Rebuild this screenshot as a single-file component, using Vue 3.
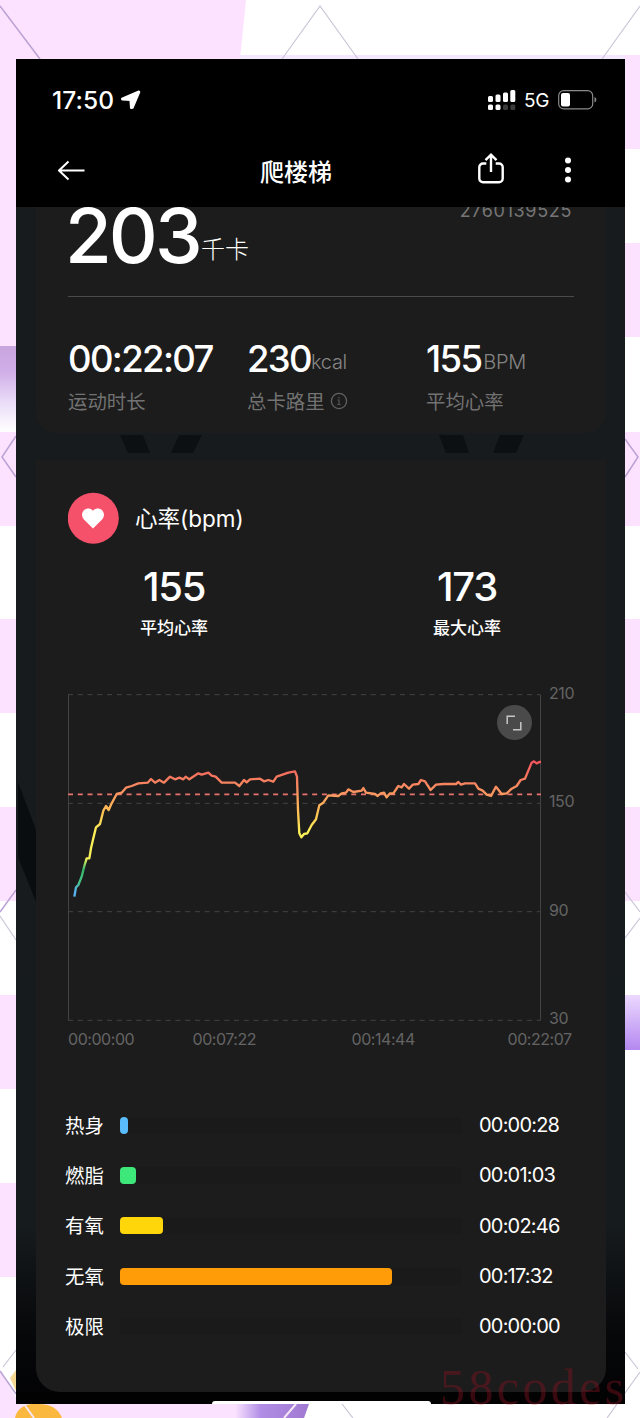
<template>
  <div class="page">
    <svg class="page__backdrop" width="640" height="1418" viewBox="0 0 640 1418" aria-hidden="true">
      <defs>
        <linearGradient id="bandLeft" x1="0" y1="0" x2="0" y2="1">
          <stop offset="0" stop-color="#c9a5de"/>
          <stop offset="0.3" stop-color="#d0aee8"/>
          <stop offset="0.65" stop-color="#eadcf8"/>
          <stop offset="1" stop-color="#ffffff"/>
        </linearGradient>
        <linearGradient id="bandRight" x1="0" y1="0" x2="0" y2="1">
          <stop offset="0" stop-color="#ecd9ff"/>
          <stop offset="1" stop-color="#b488f0"/>
        </linearGradient>
        <linearGradient id="bandBottom" x1="0" y1="0" x2="1" y2="0">
          <stop offset="0" stop-color="#fbe3ff"/>
          <stop offset="0.35" stop-color="#b18de6"/>
          <stop offset="1" stop-color="#a078d2"/>
        </linearGradient>
      </defs>
      <path d="M0 0H246L240 59H0Z" fill="#fde2ff"/>
      <rect x="240" y="55" width="400" height="4" fill="#f3e8ff"/>
      <rect x="0" y="59" width="17" height="288" fill="#fde2ff"/>
      <rect x="0" y="346" width="17" height="86" fill="url(#bandLeft)"/>
      <rect v-for="y in leftBands" :key="'l' + y" x="0" :y="y" width="17" height="94" fill="#fde2ff"/>
      <rect v-for="y in rightBands" :key="'r' + y" x="624" :y="y" width="16" height="94" fill="#fde2ff"/>
      <rect x="624" y="995" width="16" height="55" fill="url(#bandRight)"/>
      <path d="M0 1371L20 1404H260V1418H0Z" fill="#fbe3ff"/>
      <path d="M235 1404H309L304 1418H235Z" fill="url(#bandBottom)"/>
      <path d="M15 1418C17 1408 26 1403 38 1404C50 1404 58 1408 62 1418Z" fill="#fbb83f"/>
      <path d="M16 1370L10 1378L16 1391Z" fill="#f3d793"/>
      <g fill="none" stroke="#cbc5d8" stroke-width="1.2">
        <path d="M282 59L320 6L358 59M602 59L640 6"/>
        <path d="M0 916L16 940M625 892L640 912M640 918L625 938"/>
        <path d="M16 1350L3 1367M625 1352L638 1369M640 1372L607 1418M342 1404L353 1418"/>
      </g>
      <g fill="none" stroke="#b9a2d3" stroke-width="1.5">
        <path d="M0 6L40 59M16 436L2 457L16 477M625 439L638 457L625 477M16 890L0 912M0 1371L16 1394"/>
      </g>
      <path d="M24 1404L34 1418M296 1404L284 1418" stroke="#f6e6f5" stroke-width="2"/>
    </svg>

    <div class="phone">
      <header class="header">
        <div class="status">
          <span class="status__time">17:50</span>
          <svg class="status__location" width="21" height="20" viewBox="0 0 21 20">
            <path d="M18.800 1.500 2 8.600 2.200 9.400 10.400 10 11 18 12.600 17.800 19.300 2Z" fill="#fff" stroke="#fff" stroke-width="2" stroke-linejoin="round"/>
          </svg>
          <svg class="status__signal" width="28" height="20" viewBox="0 0 28 20" fill="#fff">
            <rect x="0" y="6" width="5" height="6" rx="1.500"/>
            <rect x="7.500" y="4.500" width="5" height="7.500" rx="1.500"/>
            <rect x="15" y="2.500" width="5" height="9.500" rx="1.500"/>
            <rect x="22.300" y="0" width="5" height="12" rx="1.500"/>
            <rect x="0" y="14.500" width="5" height="5.500" rx="1.500"/>
            <rect x="7.500" y="14.500" width="5" height="5.500" rx="1.500"/>
            <rect x="15" y="14.500" width="5" height="5.500" rx="1.500" fill="#3a3a3a"/>
            <rect x="22.300" y="14.500" width="5" height="5.500" rx="1.500" fill="#3a3a3a"/>
          </svg>
          <span class="status__network">5G</span>
          <svg class="status__battery" width="39" height="20" viewBox="0 0 39 20">
            <rect x=".7" y=".7" width="34" height="18.200" rx="5" fill="none" stroke="#8a8a8a" stroke-width="1.200"/>
            <rect x="3" y="3" width="9" height="13.500" rx="2" fill="#fff"/>
            <path d="M36.500 7V12.500Q38.400 12 38.400 9.800Q38.400 7.500 36.500 7Z" fill="#8a8a8a"/>
          </svg>
        </div>
        <nav class="nav">
          <svg class="nav__back" width="28" height="22" viewBox="0 0 28 22">
            <path d="M26.500 10.500H1M10.500 1.500 1 10.500 10.500 19.500" fill="none" stroke="#fff" stroke-width="2"/>
          </svg>
          <h1 class="nav__title">爬楼梯</h1>
          <svg class="nav__share" width="26" height="31" viewBox="0 0 26 31">
            <path d="M8.300 10.500H5A3.700 3.700 0 0 0 1.300 14.200V25.500A3.700 3.700 0 0 0 5 29.200H21A3.700 3.700 0 0 0 24.700 25.500V14.200A3.700 3.700 0 0 0 21 10.500H17.700M13 19V2M7.500 7.200 13 1.700 18.500 7.200" fill="none" stroke="#fff" stroke-width="2.400"/>
          </svg>
          <svg class="nav__more" width="8" height="26" viewBox="0 0 8 26" fill="#fff">
            <circle cx="4" cy="3.500" r="3"/>
            <circle cx="4" cy="13" r="3"/>
            <circle cx="4" cy="22.500" r="3"/>
          </svg>
        </nav>
      </header>

      <main class="content">
        <section class="card summary">
          <div class="summary__top">
            <span class="summary__value">203</span>
            <span class="summary__unit">千卡</span>
            <span class="summary__id">2760139525</span>
          </div>
          <div class="summary__stats">
            <div v-for="item in stats" :key="item.label" class="stat">
              <div class="stat__row">
                <span class="stat__value">{{ item.value }}</span>
                <span v-if="item.unit" class="stat__unit">{{ item.unit }}</span>
              </div>
              <div class="stat__label">
                {{ item.label }}
                <svg v-if="item.info" class="stat__info" width="18" height="18" viewBox="0 0 18 18">
                  <circle cx="9" cy="9" r="7.600" fill="none" stroke="#626262" stroke-width="1.300"/>
                  <path d="M9 5V6.500M7.500 8H9V12.500M7.300 12.500H10.700" fill="none" stroke="#555" stroke-width="1.200"/>
                </svg>
              </div>
            </div>
          </div>
        </section>

        <div class="gap">
          <svg width="570" height="27" viewBox="0 0 570 27" fill="#0d1012">
            <path d="M84 2H107L114 20H92ZM143 2H166L157 20H135ZM403 2H427L433 20H410ZM464 2H488L480 20H457Z"/>
          </svg>
        </div>

        <section class="card heart">
          <div class="heart__head">
            <svg width="52" height="52" viewBox="0 0 52 52">
              <circle cx="25.300" cy="26.300" r="25.500" fill="#f6516b"/>
              <path d="M25 36.500 15.900 27.400C13.300 24.600 13.500 20.300 16.200 18C18.800 15.700 22.700 16 25 18.700C27.300 16 31.200 15.700 33.800 18C36.500 20.300 36.700 24.600 34.100 27.400Z" fill="#fff"/>
            </svg>
            <h2 class="heart__title">心率(bpm)</h2>
          </div>
          <div class="heart__numbers">
            <div v-for="item in rates" :key="item.label" class="rate">
              <div class="rate__value">{{ item.value }}</div>
              <div class="rate__label">{{ item.label }}</div>
            </div>
          </div>

          <div class="chart">
            <svg class="chart__plot" width="474" height="328" viewBox="0 0 1422 984">
              <defs>
                <linearGradient id="rate" gradientUnits="userSpaceOnUse" x1="0" y1="200" x2="0" y2="608">
                  <stop offset="0" stop-color="#f4525c"/>
                  <stop offset="0.12" stop-color="#f6785f"/>
                  <stop offset="0.25" stop-color="#fa9a60"/>
                  <stop offset="0.38" stop-color="#ffc055"/>
                  <stop offset="0.52" stop-color="#fdf056"/>
                  <stop offset="0.72" stop-color="#f5f25a"/>
                  <stop offset="0.8" stop-color="#35b56c"/>
                  <stop offset="0.89" stop-color="#45c583"/>
                  <stop offset="0.96" stop-color="#58b4f0"/>
                </linearGradient>
              </defs>
              <g stroke="#434343" stroke-width="3" fill="none">
                <path v-for="y in gridLines" :key="y" :d="`M0 ${y}H1417`" stroke-dasharray="15 14.300"/>
                <path d="M1.500 2V979M1417.500 2V979"/>
              </g>
              <path d="M0 301H1419" stroke="#e8736c" stroke-width="5" stroke-dasharray="15 14.300"/>
              <polyline :points="heartRate" fill="none" stroke="url(#rate)" stroke-width="7" stroke-linejoin="round"/>
            </svg>
            <div class="chart__scale">
              <span v-for="n in scale" :key="n">{{ n }}</span>
            </div>
            <button class="chart__expand" type="button">
              <svg width="16" height="16" viewBox="0 0 16 16">
                <path d="M1.200 9V1.200H9M7 14.800H14.800V7" fill="none" stroke="#c6c6c6" stroke-width="1.500"/>
              </svg>
            </button>
          </div>
          <div class="times">
            <span v-for="t in times" :key="t">{{ t }}</span>
          </div>

          <div class="zones">
            <div v-for="zone in zones" :key="zone.label" class="zone">
              <span class="zone__label">{{ zone.label }}</span>
              <span class="zone__track">
                <span class="zone__bar" :style="{width: zone.width + 'px', background: zone.color}"></span>
              </span>
              <span class="zone__time">{{ zone.time }}</span>
            </div>
          </div>
        </section>
        <svg class="shade" width="20" height="120" viewBox="0 0 20 120">
          <path d="M2 0L20 48V120L2 75Z" fill="#0a0d0f"/>
        </svg>
      </main>
      <div class="home"></div>
    </div>
    <div class="watermark">58codes</div>
  </div>
</template>

<script setup>
const leftBands = [432, 619, 807, 995, 1183];
const rightBands = [55, 243, 432, 619, 807];

const stats = [
  {value: '00:22:07', label: '运动时长'},
  {value: '230', unit: 'kcal', label: '总卡路里', info: true},
  {value: '155', unit: 'BPM', label: '平均心率'},
];

const rates = [
  {value: 155, label: '平均心率'},
  {value: 173, label: '最大心率'},
];

const gridLines = [2, 328, 653, 979];
const scale = [210, 150, 90, 30];
const times = ['00:00:00', '00:07:22', '00:14:44', '00:22:07'];

const heartRate = [
  '19,608 24,580 31,573 41,548 49,516 56,493 64,493 69,463 76,433 84,400 96,390 106,350 114,336 122,348',
  '131,328 146,300 161,296 174,281 191,276 211,268 239,266 249,255 261,266 274,258 288,266 306,248 321,256',
  '334,251 346,256 353,248 364,256 391,238 401,242 421,236 431,245 443,248 461,266 501,266 514,276 528,258',
  '536,265 546,256 576,254 588,262 601,258 616,263 626,248 661,236 681,232 687,248 690,348 694,418 700,430',
  '708,420 718,418 731,393 744,376 754,334 766,326 781,304 811,306 821,298 834,296 841,286 856,294 881,290',
  '886,282 894,296 921,300 929,306 938,298 948,296 956,310 966,298 976,298 991,276 1001,280 1008,270',
  '1023,284 1034,272 1051,270 1059,258 1071,262 1088,288 1104,272 1126,270 1164,270 1171,264 1179,272',
  '1191,268 1221,268 1231,284 1244,290 1256,302 1269,306 1284,278 1301,300 1316,298 1331,284 1346,276',
  '1358,258 1371,254 1391,206 1398,202 1406,208 1414,204 1419,204',
].join(' ');

const zones = [
  {label: '热身', width: 7.5, color: '#5bbcfb', time: '00:00:28'},
  {label: '燃脂', width: 16, color: '#3ee77a', time: '00:01:03'},
  {label: '有氧', width: 43, color: '#ffd60a', time: '00:02:46'},
  {label: '无氧', width: 271.5, color: '#ff9c08', time: '00:17:32'},
  {label: '极限', width: 0, color: '#f6516b', time: '00:00:00'},
];
</script>

<style>
body {
  margin: 0;
  background: #fff;
}
</style>
<style scoped>
.page {
  position: relative;
  box-sizing: border-box;
  width: 640px;
  height: 1418px;
  padding: 59px 15px 14px 16px;
  overflow: hidden;
  font-family: Inter, "Noto Sans CJK SC", sans-serif;
  color: #fff;
}

.page__backdrop {
  position: absolute;
  left: 0;
  top: 0;
}

svg {
  display: block;
  flex: none;
}

h1, h2 {
  margin: 0;
}

.phone {
  position: relative;
  height: 1345px;
  overflow: hidden;
  background: #000;
}

.header {
  height: 148px;
  background: #000;
}

.status {
  display: flex;
  align-items: center;
  height: 82px;
  padding: 0 28px 0 36px;
}

.status__time {
  width: 68px;
  font-size: 24.5px;
  font-weight: 500;
  letter-spacing: 0.1px;
}

.status__signal {
  margin-left: auto;
}

.status__network {
  width: 42px;
  padding-left: 8px;
  box-sizing: border-box;
  font-size: 19px;
  letter-spacing: -0.3px;
}

.nav {
  display: flex;
  align-items: center;
  height: 60px;
  padding: 0 53px 0 42px;
}

.nav__title {
  width: 72px;
  margin: 3px 0 0 174px;
  font-size: 24px;
  font-weight: 500;
  line-height: 30px;
  white-space: nowrap;
}

.nav__share {
  margin: -5px 0 0 146px;
}

.nav__more {
  margin: -3px 0 0 auto;
}

.content {
  position: relative;
  height: 1197px;
  padding: 0 19px 0 20px;
  overflow: hidden;
  background: linear-gradient(#171b1e, #161b1e 80%, #161b1e 85%, #07080a 94%, #020203);
}

.card {
  box-sizing: border-box;
  background: #1c1c1c;
}

.summary {
  height: 226px;
  padding: 0 32px;
  border-radius: 0 0 20px 20px;
}

.summary__top {
  display: flex;
  height: 89px;
  border-bottom: 1px solid #4a4a4a;
}

.summary__value {
  width: 136px;
  margin-top: -22px;
  margin-left: -3px;
  font-size: 76px;
  font-weight: 500;
  line-height: 100px;
  letter-spacing: -3px;
}

.summary__unit {
  padding-top: 27px;
  font-size: 24px;
  font-weight: 300;
  line-height: 32px;
}

.summary__id {
  margin: -6px 2px 0 auto;
  font-size: 18px;
  line-height: 20px;
  letter-spacing: 0.65px;
  color: #757575;
}

.summary__stats {
  display: grid;
  grid-template-columns: 179px 179px 1fr;
  padding-top: 42px;
}

.stat__row {
  display: flex;
  height: 40px;
  align-items: center;
}

.stat__value {
  font-size: 36.5px;
  font-weight: 500;
  line-height: 40px;
  letter-spacing: -1.65px;
}

.stat__unit {
  padding-top: 5px;
  font-size: 20px;
  font-weight: 300;
  letter-spacing: -0.3px;
  color: #858585;
}

.stat:last-child .stat__unit {
  padding-left: 2px;
}

.stat__label {
  display: flex;
  gap: 5px;
  align-items: center;
  height: 43px;
  font-size: 19.4px;
  color: #727272;
}

.gap {
  height: 27px;
}

.heart {
  height: 932px;
  padding: 32px 32px 0;
  border-radius: 0 0 24px 24px;
}

.heart__head {
  display: flex;
  align-items: center;
  gap: 15px;
  height: 52px;
}

.heart__title {
  padding-top: 2px;
  font-size: 22.5px;
  font-weight: 400;
  line-height: 30px;
}

.heart__numbers {
  display: grid;
  grid-template-columns: 212px 212px;
  column-gap: 81px;
  padding-top: 21px;
  text-align: center;
}

.rate__value {
  font-size: 40px;
  font-weight: 500;
  line-height: 44px;
  letter-spacing: -1.3px;
}

.rate__label {
  font-size: 17px;
  font-weight: 500;
  line-height: 38px;
}

.chart {
  position: relative;
  display: flex;
  height: 328px;
  margin-top: 47px;
}

.chart__scale {
  display: flex;
  flex-direction: column;
  justify-content: space-between;
  height: 345px;
  margin: -11px 0 0 7px;
  font-size: 16px;
  line-height: 20px;
  letter-spacing: -0.4px;
  color: #646464;
}

.chart__expand {
  position: absolute;
  left: 428.5px;
  top: 11px;
  display: flex;
  align-items: center;
  justify-content: center;
  width: 35px;
  height: 35px;
  padding: 0;
  border: 0;
  border-radius: 50%;
  background: #4a4a4a;
}

.times {
  display: grid;
  grid-template-columns: 124.5px 159px 156px 1fr;
  height: 36px;
  font-size: 16px;
  line-height: 34px;
  letter-spacing: -0.45px;
  white-space: nowrap;
  color: #646464;
}

.zones {
  margin: 42px 0 0 -3px;
}

.zone {
  display: flex;
  align-items: center;
  height: 50.3px;
}

.zone__label {
  width: 55px;
  margin-top: -2px;
  font-size: 19.4px;
}

.zone__track {
  width: 342px;
  height: 17px;
  border-radius: 4px;
  background: #1a1a1a;
}

.zone__bar {
  display: block;
  height: 17px;
  border-radius: 4px;
}

.zone__time {
  margin-left: 17px;
  font-size: 20px;
  letter-spacing: -0.8px;
}

.shade {
  position: absolute;
  left: 0;
  top: 575px;
}

.home {
  position: absolute;
  left: 196px;
  bottom: 0;
  width: 219px;
  height: 3px;
  border-radius: 3px 3px 0 0;
  background: #fff;
}

.watermark {
  position: absolute;
  left: 440px;
  top: 1361px;
  font-family: "Liberation Serif", serif;
  font-size: 50px;
  line-height: 52px;
  letter-spacing: 3.4px;
  color: rgba(140, 20, 36, 0.4);
}
</style>
